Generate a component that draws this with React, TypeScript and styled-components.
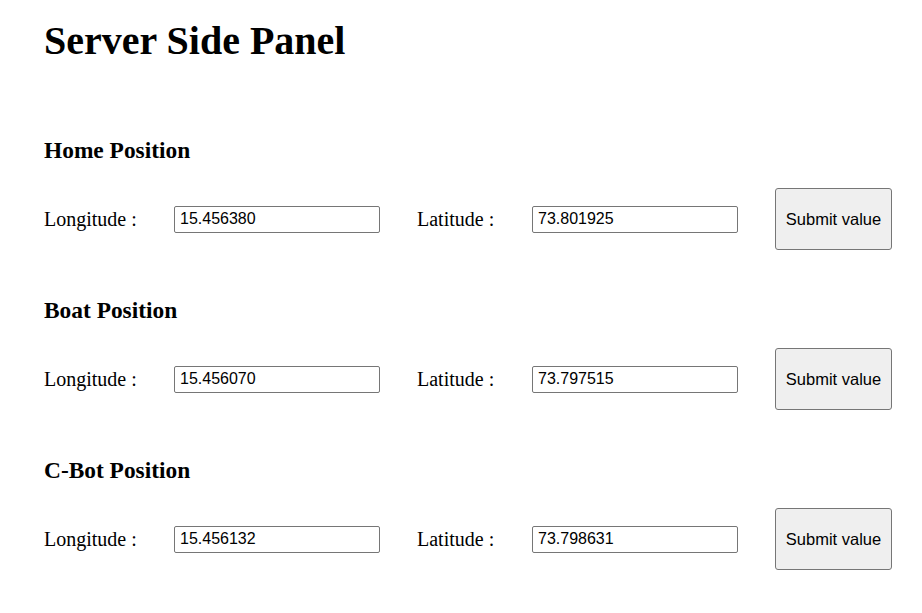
import React from "react";
import styled, { createGlobalStyle } from "styled-components";

const Global = createGlobalStyle`
  html, body { margin: 0; padding: 0; background: #ffffff; }
  body { font-family: "Liberation Serif", "Times New Roman", serif; font-size: 20px; color: #000; }
`;

const Page = styled.main`
  padding: 18px 0 0 44px;
  display: flex;
  flex-direction: column;
`;

const Title = styled.h1`
  margin: 0 0 73px 0;
  font-size: 40px;
  line-height: 46px;
  font-weight: bold;
`;

const Section = styled.section`
  display: flex;
  flex-direction: column;
  gap: 25px;
  margin-bottom: 47px;
`;

const Heading = styled.h3`
  margin: 0;
  font-size: 23.4px;
  line-height: 26px;
  font-weight: bold;
`;

const Row = styled.div`
  display: flex;
  align-items: center;
  height: 62px;
`;

const Label = styled.label<{ $w: number }>`
  width: ${(p) => p.$w}px;
  font-size: 20px;
  line-height: 22px;
  flex: none;
`;

const Field = styled.input`
  box-sizing: border-box;
  width: 206px;
  height: 27px;
  padding: 1px 5px;
  border: 1px solid #767676;
  border-radius: 2px;
  font-family: "Liberation Sans", Arial, sans-serif;
  font-size: 16px;
  color: #000;
  background: #fff;
  margin-right: 37px;
  flex: none;
  outline: none;
`;

const Submit = styled.button`
  box-sizing: border-box;
  width: 117px;
  height: 62px;
  padding: 0;
  border: 1px solid #767676;
  border-radius: 3px;
  background: #efefef;
  font-family: "Liberation Sans", Arial, sans-serif;
  font-size: 16.5px;
  color: #000;
  flex: none;
`;

const data = [
  { title: "Home Position", lon: "15.456380", lat: "73.801925" },
  { title: "Boat Position", lon: "15.456070", lat: "73.797515" },
  { title: "C-Bot Position", lon: "15.456132", lat: "73.798631" },
];

export default function App() {
  return (
    <>
      <Global />
      <Page>
        <Title>Server Side Panel</Title>
        {data.map((d) => (
          <Section key={d.title}>
            <Heading>{d.title}</Heading>
            <Row>
              <Label $w={130}>Longitude :</Label>
              <Field defaultValue={d.lon} />
              <Label $w={115}>Latitude :</Label>
              <Field defaultValue={d.lat} />
              <Submit>Submit value</Submit>
            </Row>
          </Section>
        ))}
      </Page>
    </>
  );
}
